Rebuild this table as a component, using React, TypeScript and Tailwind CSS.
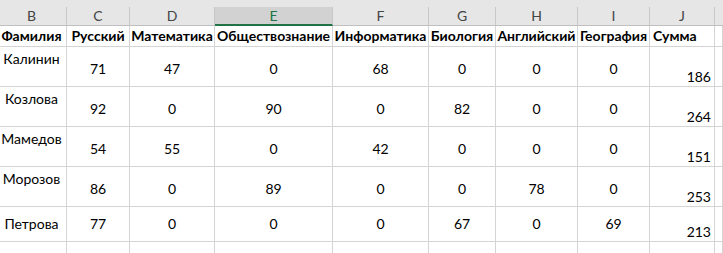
import React from 'react';

const cols = [
  { letter: 'B', title: 'Фамилия', w: 'w-[70px]' },
  { letter: 'C', title: 'Русский', w: 'w-[63px]' },
  { letter: 'D', title: 'Математика', w: 'w-[85px]' },
  { letter: 'E', title: 'Обществознание', w: 'w-[118px]' },
  { letter: 'F', title: 'Информатика', w: 'w-[96px]' },
  { letter: 'G', title: 'Биология', w: 'w-[67px]' },
  { letter: 'H', title: 'Английский', w: 'w-[82px]' },
  { letter: 'I', title: 'География', w: 'w-[72px]' },
  { letter: 'J', title: 'Сумма', w: 'w-[65px]' },
];

const rows = [
  { name: 'Калинин', scores: [71, 47, 0, 68, 0, 0, 0], sum: 186, h: 'h-[40px]', last: false },
  { name: 'Козлова', scores: [92, 0, 90, 0, 82, 0, 0], sum: 264, h: 'h-[40px]', last: false },
  { name: 'Мамедов', scores: [54, 55, 0, 42, 0, 0, 0], sum: 151, h: 'h-[40px]', last: false },
  { name: 'Морозов', scores: [86, 0, 89, 0, 0, 78, 0], sum: 253, h: 'h-[40px]', last: false },
  { name: 'Петрова', scores: [77, 0, 0, 0, 67, 0, 69], sum: 213, h: 'h-[35px]', last: true },
];

const cell = 'shrink-0 border-r border-b border-[#d4d4d4] box-border';

export default function App() {
  return (
    <div
      className="w-[723px] h-[253px] overflow-hidden bg-white text-black"
      style={{ fontFamily: 'Lato, "Open Sans", sans-serif' }}
    >
      <div className="h-[7px] bg-[#e6e6e6]" />

      {/* column letters */}
      <div className="flex h-[19px] ml-[-3px] bg-[#e6e6e6]">
        {cols.map((c) => (
          <div
            key={c.letter}
            className={`${c.w} shrink-0 box-border border-r border-[#c8c8c8] flex items-center justify-center text-[14px] leading-none ${
              c.letter === 'E'
                ? 'bg-[#d2d2d2] text-[#217346] border-b-2 border-b-[#217346]'
                : 'text-[#444] border-b border-b-[#bfbfbf]'
            }`}
          >
            {c.letter}
          </div>
        ))}
        <div className="flex-1 border-b border-b-[#bfbfbf]" />
      </div>

      {/* titles */}
      <div className="flex h-[21px] ml-[-3px]">
        {cols.map((c) => (
          <div
            key={c.title}
            className={`${c.w} ${cell} flex items-center font-bold text-[14px] leading-[20px] whitespace-nowrap ${
              c.letter === 'J' ? 'justify-start pl-[3px]' : 'justify-center'
            }`}
          >
            {c.title}
          </div>
        ))}
        <div className={`flex-1 ${cell}`} />
      </div>

      {rows.map((r) => (
        <div key={r.name} className={`flex ${r.h} ml-[-3px] text-[14px] leading-[20px]`}>
          <div
            className={`${cols[0].w} ${cell} flex justify-center ${
              r.last ? 'items-center' : 'items-start pt-[2px]'
            }`}
          >
            {r.name}
          </div>
          {r.scores.map((s, i) => (
            <div
              key={i}
              className={`${cols[i + 1].w} ${cell} flex justify-center ${
                r.last ? 'items-center' : 'items-start pt-[12px]'
              }`}
            >
              {s}
            </div>
          ))}
          <div className={`${cols[8].w} ${cell} flex items-end justify-end pr-[3px] pb-[-1px]`}>
            <span className="leading-[18px]">{r.sum}</span>
          </div>
          <div className={`flex-1 ${cell}`} />
        </div>
      ))}

      <div className="flex h-[20px] ml-[-3px]">
        {cols.map((c) => (
          <div key={c.letter + 'x'} className={`${c.w} ${cell}`} />
        ))}
        <div className={`flex-1 ${cell}`} />
      </div>
    </div>
  );
}
